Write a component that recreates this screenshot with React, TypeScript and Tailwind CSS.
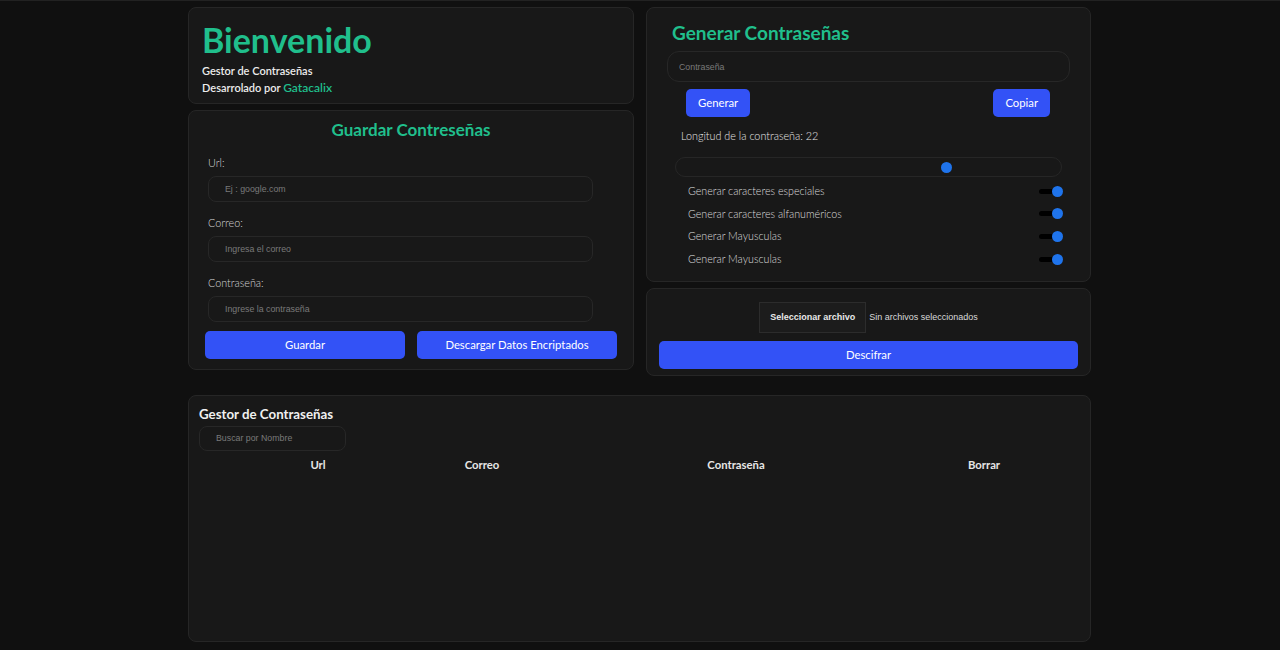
import React, { useState } from 'react';

const heading = { fontFamily: 'Lato, "Open Sans", sans-serif' };
const plain = { fontFamily: '"Liberation Sans", Arial, sans-serif' };

const Field = ({ label, placeholder }: { label: string; placeholder: string }) => (
    <div className="flex flex-col">
        <label className="text-[10.8px] font-light text-[#d4d4d4] leading-[12px] mb-[7px]" style={heading}>{label}</label>
        <input
            placeholder={placeholder}
            className="w-[385px] h-[26px] rounded-[8px] border border-[#272727] bg-[#181818] pl-[16px] text-[8.8px] text-white placeholder:text-[#7a7a7a] outline-none"
            style={plain}
        />
    </div>
);

const Switch = ({ on }: { on: boolean }) => (
    <div className="relative w-[24px] h-[10px] flex items-center">
        <div className="w-[16px] h-[5px] rounded-full bg-black" />
        <div className={`absolute right-0 w-[11px] h-[11px] rounded-full ${on ? 'bg-[#1f74ec]' : 'bg-gray-500'}`} />
    </div>
);

const App = () => {
    const [length, setLength] = useState(22);
    const options = [
        'Generar caracteres especiales',
        'Generar caracteres alfanuméricos',
        'Generar Mayusculas',
        'Generar Mayusculas',
    ];

    return (
        <div className="min-h-[650px] bg-[#101010] border-t border-[#222] pt-[6px]">
            <div className="w-[903px] ml-[188px]">
                <div className="grid grid-cols-[446px_445px] gap-x-[12px]">
                    {/* columna izquierda */}
                    <div className="flex flex-col gap-[6px]">
                        <div className="h-[97px] rounded-[8px] border border-[#262626] bg-[#181818] pl-[13px] pt-[15px]">
                            <h1 className="text-[34px] font-bold leading-none text-[#20bf8c]" style={heading}>Bienvenido</h1>
                            <p className="mt-[5px] text-[11px] font-semibold text-[#ececec] leading-[17px]" style={heading}>Gestor de Contraseñas</p>
                            <p className="text-[11px] font-semibold text-[#ececec] leading-[17px]" style={heading}>
                                Desarrolado por <span className="text-[#20bf8c] text-[12px]">Gatacalix</span>
                            </p>
                        </div>

                        <div className="h-[260px] rounded-[8px] border border-[#262626] bg-[#181818] px-[16px] pt-[7px]">
                            <h2 className="text-center text-[17px] font-bold text-[#20bf8c] leading-[24px]" style={heading}>Guardar Contreseñas</h2>
                            <div className="flex flex-col gap-[15px] mt-[15px] pl-[3px]">
                                <Field label="Url:" placeholder="Ej : google.com" />
                                <Field label="Correo:" placeholder="Ingresa el correo" />
                                <Field label="Contraseña:" placeholder="Ingrese la contraseña" />
                            </div>
                            <div className="grid grid-cols-2 gap-[12px] mt-[9px]">
                                <button className="h-[28px] rounded-[5px] bg-[#3352f6] text-[11.3px] text-white" style={heading}>Guardar</button>
                                <button className="h-[28px] rounded-[5px] bg-[#3352f6] text-[11.3px] text-white" style={heading}>Descargar Datos Encriptados</button>
                            </div>
                        </div>
                    </div>

                    {/* columna derecha */}
                    <div className="flex flex-col gap-[6px]">
                        <div className="h-[275px] rounded-[8px] border border-[#262626] bg-[#181818] px-[20px] pt-[13px]">
                            <h2 className="pl-[5px] text-[19px] font-bold text-[#20bf8c] leading-[24px]" style={heading}>Generar Contraseñas</h2>
                            <input
                                placeholder="Contraseña"
                                className="mt-[6px] w-full h-[31px] rounded-[12px] border border-[#272727] bg-[#181818] pl-[11px] text-[8.8px] text-white placeholder:text-[#7a7a7a] outline-none"
                                style={plain}
                            />
                            <div className="flex justify-between pl-[19px] pr-[20px] mt-[7px]">
                                <button className="h-[28px] px-[12px] rounded-[5px] bg-[#3352f6] text-[11.3px] text-white" style={heading}>Generar</button>
                                <button className="h-[28px] px-[12px] rounded-[5px] bg-[#3352f6] text-[11.3px] text-white" style={heading}>Copiar</button>
                            </div>
                            <p className="mt-[11px] pl-[14px] text-[10.8px] font-light text-[#e6e6e6] leading-[16px]" style={heading}>
                                Longitud de la contraseña: {length}
                            </p>
                            <div className="relative mt-[13px] mx-[8px] h-[20px] rounded-full border border-[#262626]">
                                <input
                                    type="range"
                                    min={4}
                                    max={30}
                                    value={length}
                                    onChange={(e) => setLength(Number(e.target.value))}
                                    className="absolute inset-0 w-full opacity-0"
                                />
                                <div className="absolute top-[4px] left-[265px] w-[11px] h-[11px] rounded-full bg-[#1f74ec]" />
                            </div>
                            <div className="mt-[3px] flex flex-col pl-[21px] pr-[7px]">
                                {options.map((opt, i) => (
                                    <div key={i} className="flex items-center justify-between h-[22.6px]">
                                        <span className="text-[10.7px] font-light text-[#dcdcdc]" style={heading}>{opt}</span>
                                        <Switch on />
                                    </div>
                                ))}
                            </div>
                        </div>

                        <div className="h-[88px] rounded-[8px] border border-[#262626] bg-[#181818] px-[12px] pt-[13px]">
                            <div className="flex justify-center items-center gap-[3px]">
                                <label className="h-[31px] px-[10px] flex items-center bg-[#1c1c1c] border border-[#2c2c2c] text-[9px] font-bold text-[#e8e8e8]" style={plain}>
                                    Seleccionar archivo
                                    <input type="file" className="hidden" />
                                </label>
                                <span className="text-[9px] text-[#d8d8d8]" style={plain}>Sin archivos seleccionados</span>
                            </div>
                            <button className="mt-[8px] w-full h-[28px] rounded-[5px] bg-[#3352f6] text-[11.3px] text-white" style={heading}>Descifrar</button>
                        </div>
                    </div>
                </div>

                {/* tabla */}
                <div className="mt-[19px] h-[247px] rounded-[8px] border border-[#262626] bg-[#181818] px-[10px] pt-[9px]">
                    <h3 className="text-[13.3px] font-bold text-[#f0f0f0] leading-[18px]" style={heading}>Gestor de Contraseñas</h3>
                    <input
                        placeholder="Buscar por Nombre"
                        className="mt-[1px] w-[147px] h-[25px] rounded-[8px] border border-[#272727] bg-[#181818] pl-[16px] text-[8.8px] text-white placeholder:text-[#7a7a7a] outline-none"
                        style={plain}
                    />
                    <div className="grid grid-cols-[238px_90px_418px_78px] mt-[6px] text-[11.3px] font-bold text-[#e6e6e6] text-center" style={heading}>
                        <span>Url</span>
                        <span>Correo</span>
                        <span>Contraseña</span>
                        <span>Borrar</span>
                    </div>
                </div>
            </div>
        </div>
    );
};

export default App;
